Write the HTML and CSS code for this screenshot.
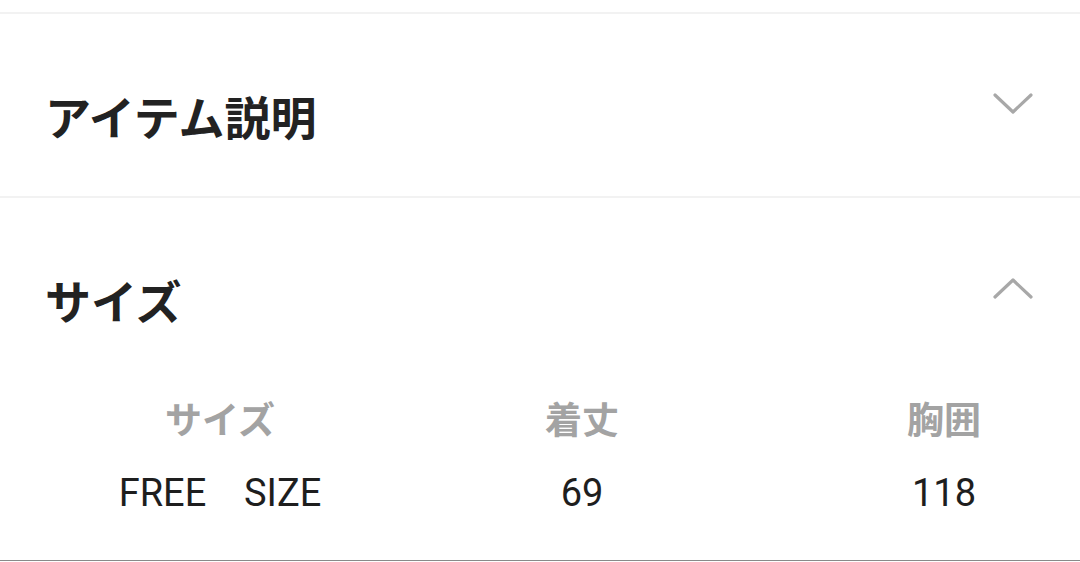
FILE: index.html
```html
<!DOCTYPE html>
<html lang="ja">
<head>
    <meta charset="UTF-8">
    <meta name="viewport" content="width=device-width, initial-scale=1.0">
    <title>アイテム詳細</title>
    <link rel="stylesheet" href="styles.css">
</head>
<body>
<div id="page">
    <div class="topbar"></div>

    <section class="panel">
        <div class="panel-head">
            <h2 class="panel-title">アイテム説明</h2>
            <svg class="chevron" width="40" height="22" viewBox="0 0 40 22">
                <polyline points="2,2 20,19 38,2" />
            </svg>
        </div>
    </section>

    <section class="panel panel-open">
        <div class="panel-head">
            <h2 class="panel-title">サイズ</h2>
            <svg class="chevron" width="40" height="22" viewBox="0 0 40 22">
                <polyline points="2,20 20,3 38,20" />
            </svg>
        </div>
        <div class="size-table">
            <div class="size-th">サイズ</div>
            <div class="size-th">着丈</div>
            <div class="size-th">胸囲</div>
            <div class="size-td">FREE&nbsp;&nbsp;&nbsp;&nbsp;SIZE</div>
            <div class="size-td">69</div>
            <div class="size-td">118</div>
        </div>
    </section>
</div>
</body>
</html>
```

FILE: styles.css
```css
html, body {
    margin: 0;
    background: #fff;
}

#page {
    width: 1080px;
    height: 562px;
    overflow: hidden;
    font-family: "Noto Sans CJK JP", "Noto Sans", sans-serif;
    color: #222;
}

.topbar {
    height: 12px;
    border-bottom: 2px solid #f2f2f2;
}

.panel {
    padding: 71px 47px 51px 45px;
    border-bottom: 2px solid #f2f2f2;
}

.panel-open {
    padding-bottom: 42px;
    border-bottom: 1px solid #8a8a8a;
}

.panel-head {
    display: flex;
    justify-content: space-between;
    align-items: flex-start;
}

.panel-title {
    margin: 0;
    font-size: 46px;
    line-height: 60px;
    font-weight: 700;
    color: #222;
}

.chevron {
    margin-top: 8px;
    fill: none;
    stroke: #a8a8a8;
    stroke-width: 3.2;
    stroke-linecap: round;
    stroke-linejoin: round;
}

.size-table {
    display: grid;
    grid-template-columns: repeat(3, 362px);
    margin: 64px 0 0 -6px;
    row-gap: 25px;
    text-align: center;
}

.size-th {
    font-size: 37px;
    line-height: 50px;
    font-weight: 700;
    color: #a3a3a3;
}

.size-td {
    font-family: Roboto, "Liberation Sans", sans-serif;
    font-size: 38px;
    line-height: 50px;
    color: #1e1e1e;
}
```
